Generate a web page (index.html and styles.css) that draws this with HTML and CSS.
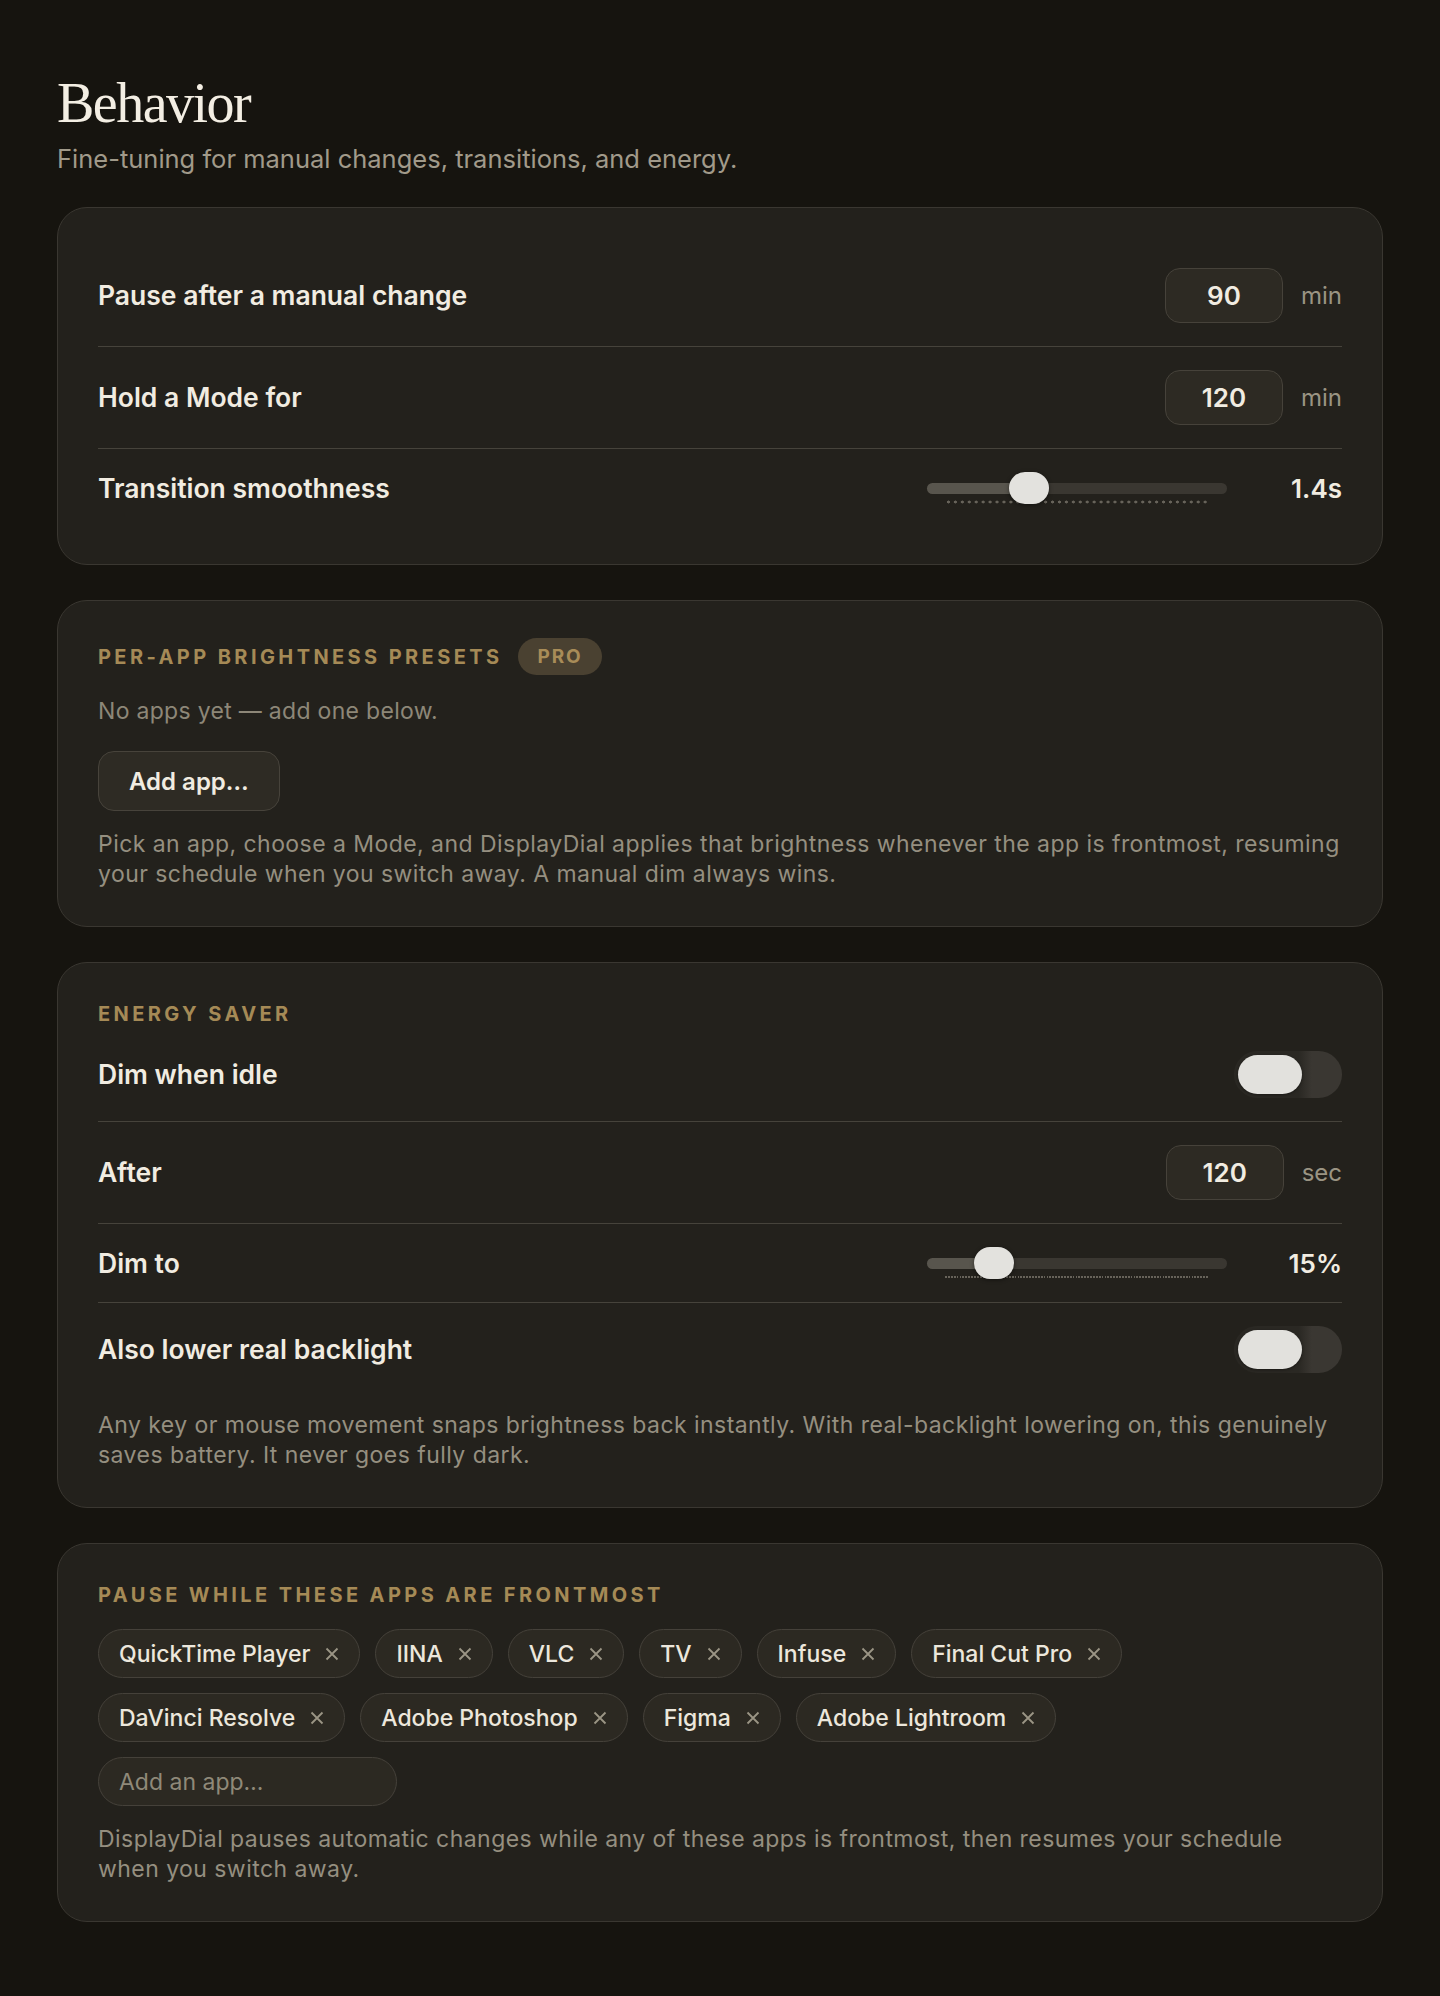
FILE: index.html
```html
<!DOCTYPE html>
<html lang="en">
<head>
    <meta charset="utf-8">
    <meta name="viewport" content="width=device-width, initial-scale=1.0">
    <title>Behavior</title>
    <link rel="stylesheet" href="styles.css">
</head>
<body>
    <main class="page">
        <h1 class="title">Behavior</h1>
        <p class="subtitle">Fine-tuning for manual changes, transitions, and energy.</p>

        <div class="cards">
            <!-- Timing -->
            <section class="card">
                <div class="rows">
                    <div class="row">
                        <span class="label">Pause after a manual change</span>
                        <div class="control">
                            <input class="num" type="text" value="90">
                            <span class="unit">min</span>
                        </div>
                    </div>
                    <div class="row">
                        <span class="label">Hold a Mode for</span>
                        <div class="control">
                            <input class="num" type="text" value="120">
                            <span class="unit">min</span>
                        </div>
                    </div>
                    <div class="row">
                        <span class="label">Transition smoothness</span>
                        <div class="control">
                            <div class="slider">
                                <div class="track" style="--fill: 102px"></div>
                                <div class="ticks ticks-wide"></div>
                                <div class="thumb" style="left: 82px"></div>
                            </div>
                            <span class="value">1.4s</span>
                        </div>
                    </div>
                </div>
            </section>

            <!-- Per-app presets -->
            <section class="card">
                <div class="section-head">
                    <h2 class="eyebrow">Per-app brightness presets</h2>
                    <span class="badge">Pro</span>
                </div>
                <p class="empty">No apps yet — add one below.</p>
                <button class="btn">Add app…</button>
                <p class="help help-gap">Pick an app, choose a Mode, and DisplayDial applies that brightness whenever the app is frontmost, resuming your schedule when you switch away. A manual dim always wins.</p>
            </section>

            <!-- Energy saver -->
            <section class="card">
                <h2 class="eyebrow">Energy saver</h2>
                <div class="rows">
                    <div class="row">
                        <span class="label">Dim when idle</span>
                        <span class="toggle"><span class="knob"></span></span>
                    </div>
                    <div class="row">
                        <span class="label">After</span>
                        <div class="control">
                            <input class="num" type="text" value="120">
                            <span class="unit">sec</span>
                        </div>
                    </div>
                    <div class="row">
                        <span class="label">Dim to</span>
                        <div class="control">
                            <div class="slider">
                                <div class="track" style="--fill: 67px"></div>
                                <div class="ticks ticks-fine"></div>
                                <div class="thumb" style="left: 47px"></div>
                            </div>
                            <span class="value">15%</span>
                        </div>
                    </div>
                    <div class="row">
                        <span class="label">Also lower real backlight</span>
                        <span class="toggle"><span class="knob"></span></span>
                    </div>
                </div>
                <p class="help help-tight">Any key or mouse movement snaps brightness back instantly. With real-backlight lowering on, this genuinely saves battery. It never goes fully dark.</p>
            </section>

            <!-- Pause list -->
            <section class="card">
                <h2 class="eyebrow">Pause while these apps are frontmost</h2>
                <div class="chips">
                    <span class="chip">QuickTime Player<svg class="x" viewBox="0 0 16 16"><path d="M2.5 2.5l11 11M13.5 2.5l-11 11"/></svg></span>
                    <span class="chip">IINA<svg class="x" viewBox="0 0 16 16"><path d="M2.5 2.5l11 11M13.5 2.5l-11 11"/></svg></span>
                    <span class="chip">VLC<svg class="x" viewBox="0 0 16 16"><path d="M2.5 2.5l11 11M13.5 2.5l-11 11"/></svg></span>
                    <span class="chip">TV<svg class="x" viewBox="0 0 16 16"><path d="M2.5 2.5l11 11M13.5 2.5l-11 11"/></svg></span>
                    <span class="chip">Infuse<svg class="x" viewBox="0 0 16 16"><path d="M2.5 2.5l11 11M13.5 2.5l-11 11"/></svg></span>
                    <span class="chip">Final Cut Pro<svg class="x" viewBox="0 0 16 16"><path d="M2.5 2.5l11 11M13.5 2.5l-11 11"/></svg></span>
                    <span class="chip">DaVinci Resolve<svg class="x" viewBox="0 0 16 16"><path d="M2.5 2.5l11 11M13.5 2.5l-11 11"/></svg></span>
                    <span class="chip">Adobe Photoshop<svg class="x" viewBox="0 0 16 16"><path d="M2.5 2.5l11 11M13.5 2.5l-11 11"/></svg></span>
                    <span class="chip">Figma<svg class="x" viewBox="0 0 16 16"><path d="M2.5 2.5l11 11M13.5 2.5l-11 11"/></svg></span>
                    <span class="chip">Adobe Lightroom<svg class="x" viewBox="0 0 16 16"><path d="M2.5 2.5l11 11M13.5 2.5l-11 11"/></svg></span>
                </div>
                <input class="add-app" type="text" placeholder="Add an app…">
                <p class="help help-gap">DisplayDial pauses automatic changes while any of these apps is frontmost, then resumes your schedule when you switch away.</p>
            </section>
        </div>
    </main>
</body>
</html>
```

FILE: styles.css
```css
*{
    margin: 0;
    padding: 0;
    box-sizing: border-box;
}
body{
    background-color: #16140f;
    font-family: Inter, "Noto Sans", sans-serif;
    color: #f1ece1;
}
.page{
    padding: 74px 57px 72px;
}
.title{
    font-family: "Liberation Serif", serif;
    font-weight: 400;
    font-size: 56px;
    line-height: 58px;
    letter-spacing: -1.5px;
    color: #f3eee3;
}
.subtitle{
    margin-top: 9px;
    font-size: 25.5px;
    line-height: 36px;
    color: #a19a8a;
}
.cards{
    margin-top: 30px;
    display: flex;
    flex-direction: column;
    gap: 35px;
}
.card{
    background-color: #23211c;
    border: 1.5px solid #3a3731;
    border-radius: 30px;
    padding: 37px 40px;
}

/* setting rows */
.row{
    display: flex;
    align-items: center;
    justify-content: space-between;
    padding: 23px 0;
    border-bottom: 1px solid #46433b;
}
.rows .row:last-child{
    border-bottom: none;
}
.label{
    font-size: 26.5px;
    line-height: 31px;
    font-weight: 600;
}
.control{
    display: flex;
    align-items: center;
}
.num{
    width: 118px;
    height: 55px;
    background-color: #2d2a23;
    border: 1.5px solid #46423a;
    border-radius: 15px;
    font-family: inherit;
    font-size: 26px;
    font-weight: 600;
    color: #f1ece1;
    text-align: center;
    outline: none;
}
.unit{
    margin-left: 18px;
    font-size: 24px;
    color: #9a9483;
}
.value{
    width: 90px;
    margin-left: 25px;
    text-align: right;
    font-size: 26px;
    line-height: 31px;
    font-weight: 600;
}

/* range slider */
.slider{
    position: relative;
    width: 300px;
    height: 32px;
}
.track{
    position: absolute;
    left: 0;
    right: 0;
    top: 10.5px;
    height: 11px;
    border-radius: 6px;
    background: linear-gradient(90deg, #58554d var(--fill), #3a3731 var(--fill));
}
.ticks{
    position: absolute;
    left: 18px;
    right: 18px;
    bottom: 0;
    height: 4px;
    background-repeat: repeat-x;
}
.ticks-wide{
    background-image: radial-gradient(circle, #67635a 1.3px, transparent 1.7px);
    background-size: 6.95px 4px;
}
.ticks-fine{
    bottom: 1px;
    height: 2.5px;
    background-image: repeating-linear-gradient(90deg, #67635a 0 1.8px, transparent 1.8px 2.9px);
}
.thumb{
    position: absolute;
    top: 0;
    width: 40px;
    height: 32px;
    border-radius: 16px;
    background-color: #e3e2de;
    box-shadow: 0 1px 4px rgba(0,0,0,0.45);
}

/* switch */
.toggle{
    display: flex;
    width: 108px;
    height: 47px;
    padding: 4px;
    border-radius: 24px;
    background: linear-gradient(90deg, #2a2823 60%, #3a3732 72%);
}
.knob{
    width: 64px;
    height: 39px;
    border-radius: 20px;
    background-color: #e2e1dd;
    box-shadow: 0 1px 3px rgba(0,0,0,0.4);
}

/* section headings */
.section-head{
    display: flex;
    align-items: center;
    gap: 16px;
}
.eyebrow{
    font-size: 20px;
    line-height: 28px;
    font-weight: 700;
    letter-spacing: 0.17em;
    text-transform: uppercase;
    color: #a58a56;
}
.badge{
    display: flex;
    align-items: center;
    height: 37px;
    padding: 0 19px;
    border-radius: 19px;
    background-color: #4a4131;
    color: #a88c58;
    font-size: 19px;
    font-weight: 700;
    letter-spacing: 0.1em;
    text-transform: uppercase;
}
.empty{
    margin-top: 20px;
    font-size: 23px;
    line-height: 32px;
    letter-spacing: 0.3px;
    color: #8d8778;
}
.btn{
    margin-top: 24px;
    height: 60px;
    padding: 0 30px;
    border-radius: 16px;
    background-color: #2e2b24;
    border: 1.5px solid #47433b;
    font-family: inherit;
    font-size: 24px;
    font-weight: 600;
    color: #f1ece1;
}
.help{
    font-size: 23px;
    line-height: 30px;
    letter-spacing: 0.45px;
    color: #958f80;
}
.help-gap{
    margin-top: 18px;
}
.help-tight{
    margin-top: 14px;
}

/* app chips */
.chips{
    margin-top: 20px;
    display: flex;
    flex-wrap: wrap;
    gap: 15px;
}
.chip{
    display: inline-flex;
    align-items: center;
    gap: 14px;
    height: 49px;
    padding: 0 19px 0 20px;
    border: 1.5px solid #45413a;
    border-radius: 25px;
    background-color: #2c2922;
    font-size: 23px;
    font-weight: 500;
    color: #ece7dc;
}
.x{
    width: 16px;
    height: 16px;
    fill: none;
    stroke: #9b9585;
    stroke-width: 1.8;
}
.add-app{
    display: block;
    margin-top: 15px;
    width: 299px;
    height: 49px;
    padding: 0 20px;
    border: 1.5px solid #45413a;
    border-radius: 25px;
    background-color: #2c2922;
    font-family: inherit;
    font-size: 23px;
    color: #ece7dc;
    outline: none;
}
.add-app::placeholder{
    color: #8f8979;
}
```
